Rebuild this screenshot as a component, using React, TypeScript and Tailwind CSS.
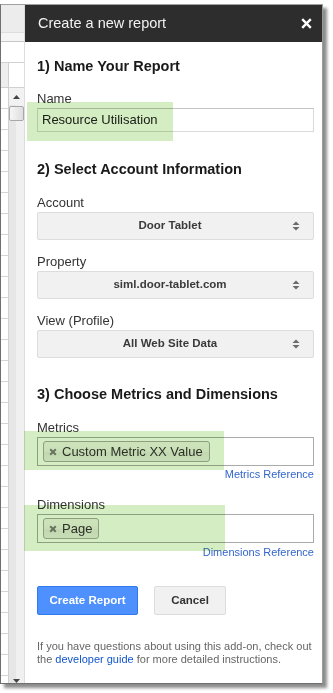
import React from "react";

function UpDown() {
  return (
    <svg width="8" height="10" viewBox="0 0 8 10">
      <polygon points="0.5,4 4,0.5 7.5,4" fill="#6a6a6a" />
      <polygon points="0.5,6 4,9.5 7.5,6" fill="#6a6a6a" />
    </svg>
  );
}

function Select({ value }: { value: string }) {
  return (
    <div className="relative mt-[1px] flex h-[28px] items-center rounded-[2px] border border-[#dcdcdc] bg-[#f1f1f1]">
      <span className="flex-1 pr-[11px] text-center text-[11.5px] font-bold text-[#3a3a3a]">{value}</span>
      <span className="absolute right-[13px] top-[8px] flex">
        <UpDown />
      </span>
    </div>
  );
}

function Chip({ label }: { label: string }) {
  return (
    <div className="flex h-[21px] items-center rounded-[3px] border border-[#aaaaaa] bg-[linear-gradient(#f4f4f4_20%,#f0f0f0_50%,#e8e8e8_52%,#eeeeee_100%)] pl-[5px] pr-[6px] text-[13px] text-[#333]">
      <svg width="8" height="8" viewBox="0 0 8 8">
        <path d="M1.2 1.2 L6.8 6.8 M6.8 1.2 L1.2 6.8" stroke="#7d7d7d" strokeWidth="2" />
      </svg>
      <span className="ml-[5px] leading-[15px]">{label}</span>
    </div>
  );
}

function Label({ children, mt }: { children: React.ReactNode; mt: string }) {
  return <div className={`${mt} text-[13px] leading-[16px] text-[#333]`}>{children}</div>;
}

function Heading({ children, mt }: { children: React.ReactNode; mt: string }) {
  return <div className={`${mt} text-[14.5px] font-bold leading-[17px] text-[#1a1a1a]`}>{children}</div>;
}

export default function App() {
  return (
    <div className="relative h-[693px] w-[333px] overflow-hidden bg-white pt-[4px] font-['Liberation_Sans',Arial,sans-serif]">
      <div className="flex h-[680px] w-[323px] border-b border-l border-r border-t border-b-[#6f6f6f] border-l-[#6f6f6f] border-r-[#9a9a9a] border-t-[#a0a0a0] shadow-[4px_4px_3px_rgba(0,0,0,0.45)]">
        {/* spreadsheet strip */}
        <div className="flex w-[24px] shrink-0 flex-col border-r border-[#dcdcdc]">
          <div className="h-[28px] shrink-0 border-b border-[#dedede] bg-[#ececec]" />
          <div className="h-[9px] shrink-0 border-b border-[#c8c8c8] bg-[#f5f5f5]" />
          <div className="h-[21px] shrink-0 border-b border-[#d0d0d0] bg-white" />
          <div className="flex h-[25px] shrink-0 border-b border-[#d0d0d0]">
            <div className="w-[7px] bg-[#eeeeee]" />
            <div className="flex-1 border-l border-[#d0d0d0] bg-white" />
          </div>
          <div className="flex min-h-0 flex-1">
            <div className="flex w-[7px] flex-col overflow-hidden">
              {Array.from({ length: 28 }).map((_, i) => (
                <div key={i} className="h-[21px] shrink-0 border-b border-[#d4d4d4]" />
              ))}
            </div>
            <div className="w-[1px] bg-[#d0d0d0]" />
            <div className="flex flex-1 flex-col bg-[linear-gradient(90deg,#e6e6e6_0%,#e6e6e6_50%,#f0f0f0_50%,#f0f0f0_100%)]">
              <div className="flex h-[17px] shrink-0 items-center justify-center bg-[#f2f2f2]">
                <svg width="7" height="4" viewBox="0 0 7 4">
                  <polygon points="0,4 3.5,0 7,4" fill="#444" />
                </svg>
              </div>
              <div className="mt-[1px] h-[15px] shrink-0 rounded-[2px] border border-[#a8a8a8] bg-[linear-gradient(90deg,#f6f6f6,#dedede)]" />
              <div className="flex-1" />
              <div className="flex h-[6px] shrink-0 items-end justify-center">
                <svg width="7" height="4" viewBox="0 0 7 4">
                  <polygon points="0,0 3.5,4 7,0" fill="#444" />
                </svg>
              </div>
            </div>
          </div>
        </div>

        {/* panel */}
        <div className="flex flex-1 flex-col bg-white">
          <div className="flex h-[37px] shrink-0 items-center justify-between bg-[#2d2d2d] pl-[13px] pr-[10px]">
            <span className="text-[14.5px] text-[#f2f2f2]">Create a new report</span>
            <svg width="11" height="11" viewBox="0 0 11 11">
              <path d="M1.2 1.2 L9.8 9.8 M9.8 1.2 L1.2 9.8" stroke="#ffffff" strokeWidth="2.4" />
            </svg>
          </div>

          <div className="flex flex-col pl-[12px] pr-[8px]">
            <Heading mt="mt-[16px]">1) Name Your Report</Heading>
            <Label mt="mt-[16px]">Name</Label>
            <div className="mt-[1px] flex h-[24px] items-center border border-[#d9d9d9] border-t-[#c4c4c4] pl-[4px] text-[13px] text-[#222]">
              Resource Utilisation
            </div>

            <Heading mt="mt-[29px]">2) Select Account Information</Heading>
            <Label mt="mt-[17px]">Account</Label>
            <Select value="Door Tablet" />
            <Label mt="mt-[14px]">Property</Label>
            <Select value="siml.door-tablet.com" />
            <Label mt="mt-[14px]">View (Profile)</Label>
            <Select value="All Web Site Data" />

            <Heading mt="mt-[28px]">3) Choose Metrics and Dimensions</Heading>
            <Label mt="mt-[17px]">Metrics</Label>
            <div className="mt-[1px] flex h-[29px] items-center border border-[#aaaaaa] pl-[5px]">
              <Chip label="Custom Metric XX Value" />
            </div>
            <div className="mt-[2px] text-right text-[11px] leading-[13px] text-[#3366cc]">Metrics Reference</div>

            <Label mt="mt-[16px]">Dimensions</Label>
            <div className="mt-[1px] flex h-[29px] items-center border border-[#aaaaaa] pl-[5px]">
              <Chip label="Page" />
            </div>
            <div className="mt-[3px] text-right text-[11px] leading-[13px] text-[#3366cc]">Dimensions Reference</div>

            <div className="mt-[27px] flex gap-[16px]">
              <div className="flex h-[29px] w-[101px] items-center justify-center rounded-[2px] border border-[#3079ed] bg-[#4d90fe] text-[11.5px] font-bold text-white">
                Create Report
              </div>
              <div className="flex h-[29px] w-[72px] items-center justify-center rounded-[2px] border border-[#dcdcdc] bg-[#f1f1f1] text-[11.5px] font-bold text-[#333]">
                Cancel
              </div>
            </div>

            <div className="mt-[25px] text-[11px] leading-[13px] text-[#666]">
              <div>If you have questions about using this add-on, check out</div>
              <div>
                the <span className="text-[#1155cc]">developer guide</span> for more detailed instructions.
              </div>
            </div>
          </div>
        </div>
      </div>

      {/* green highlights */}
      <div className="pointer-events-none absolute left-[27px] top-[102px] h-[39px] w-[146px] bg-[#d5edc2] mix-blend-multiply" />
      <div className="pointer-events-none absolute left-[24px] top-[431px] h-[39px] w-[200px] bg-[#d5edc2] mix-blend-multiply" />
      <div className="pointer-events-none absolute left-[24px] top-[505px] h-[46px] w-[201px] bg-[#d5edc2] mix-blend-multiply" />
    </div>
  );
}
